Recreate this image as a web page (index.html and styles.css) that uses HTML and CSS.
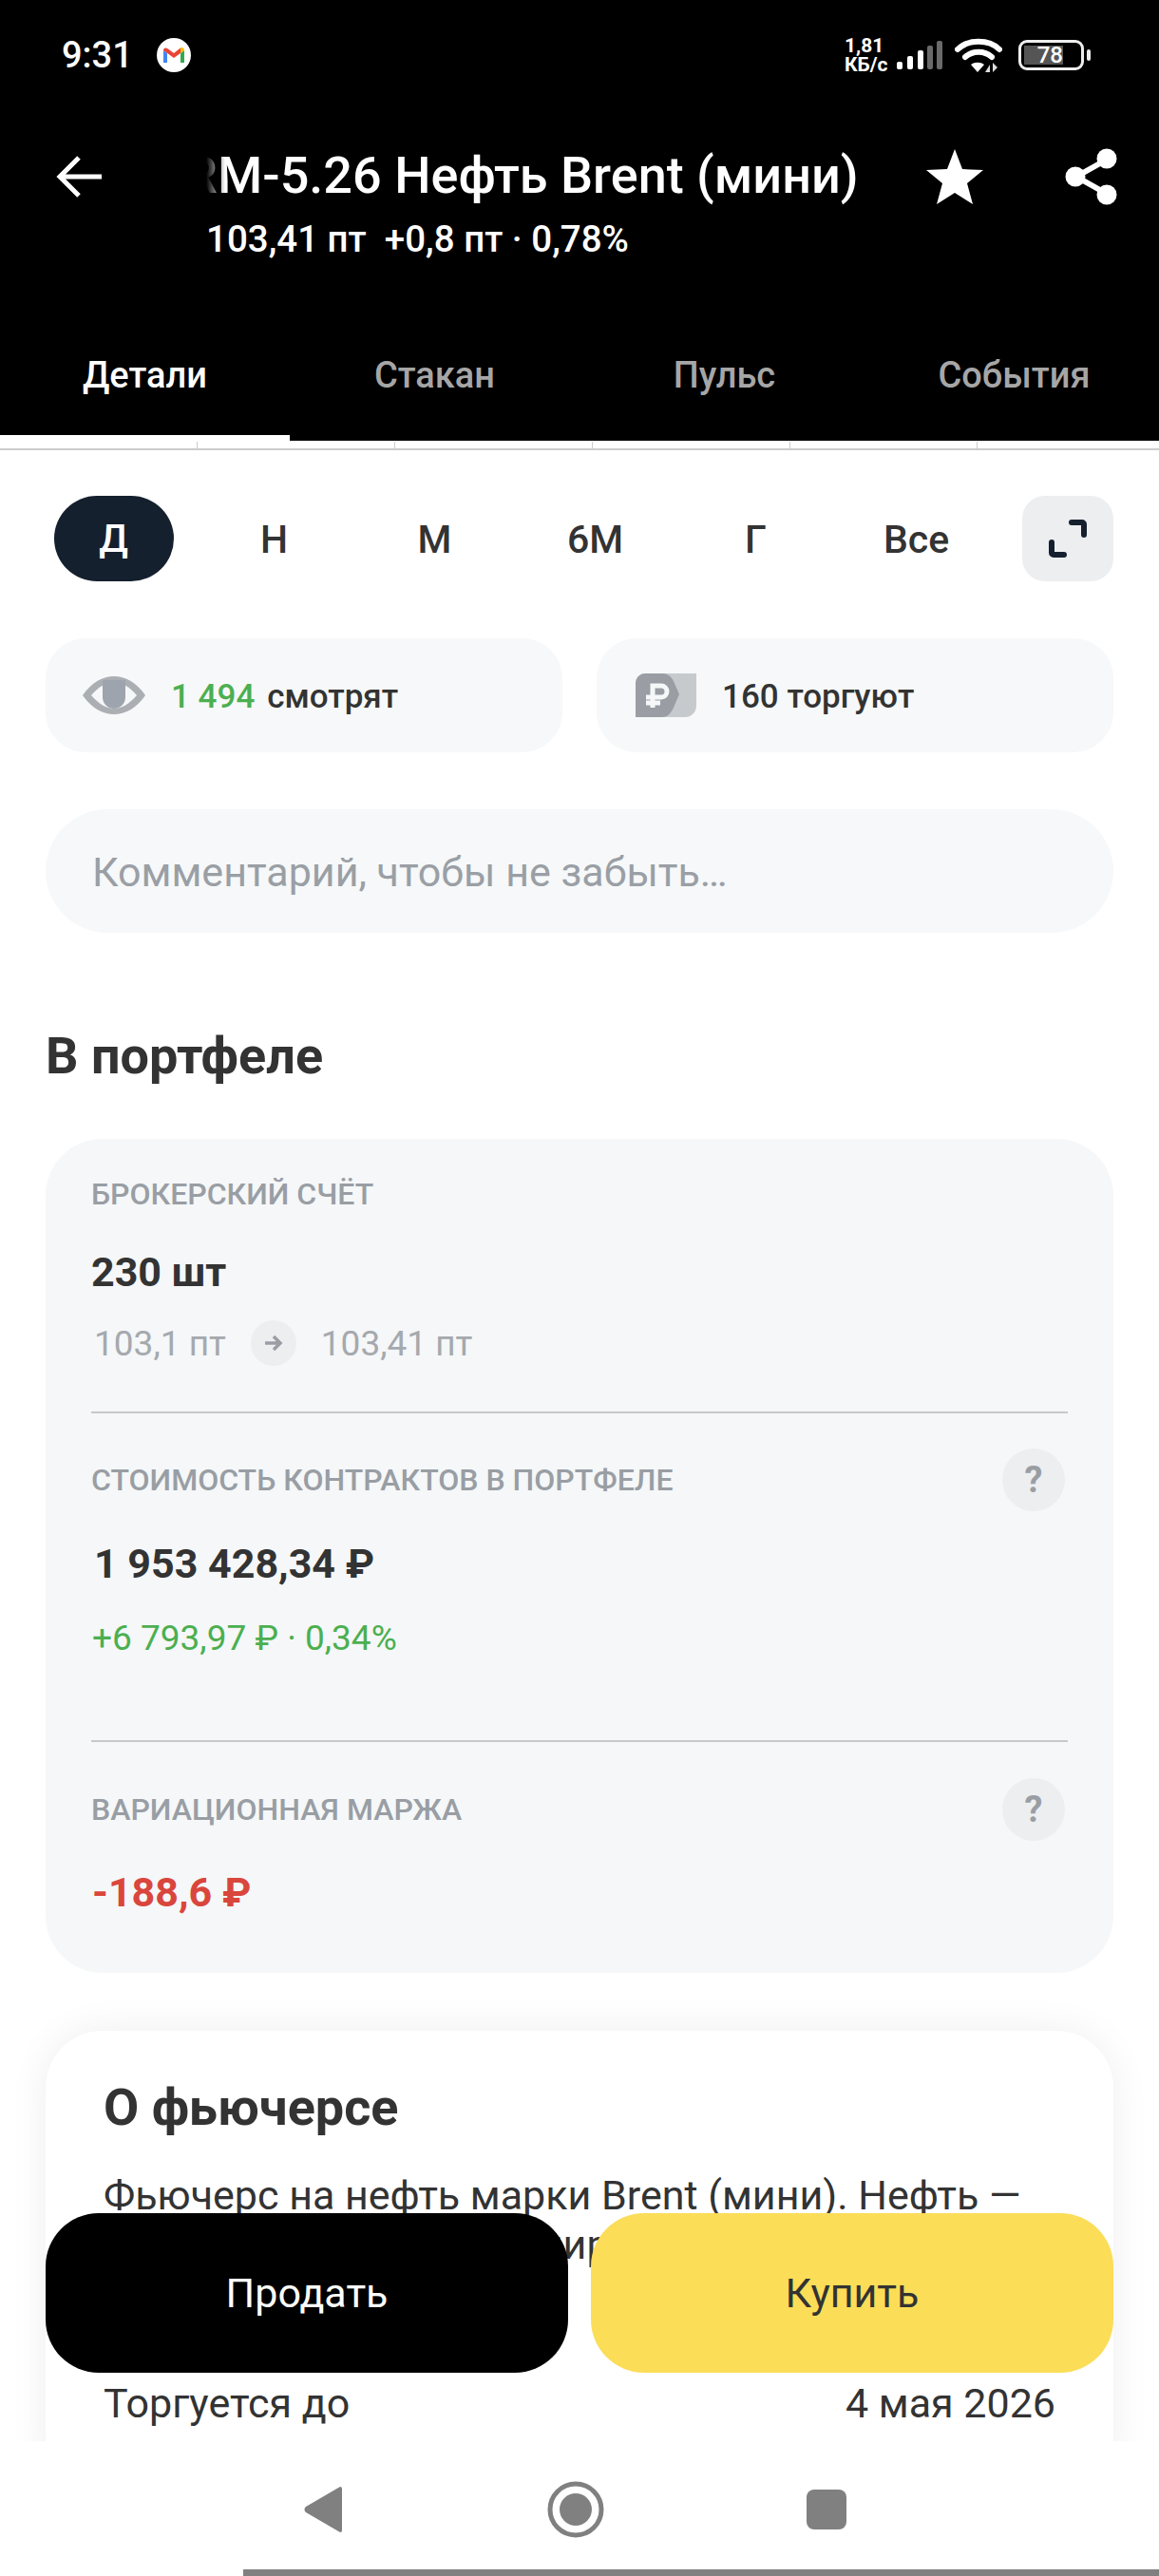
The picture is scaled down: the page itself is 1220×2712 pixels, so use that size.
FILE: index.html
```html
<!DOCTYPE html>
<html lang="ru">
    <head>
        <title>BRM-5.26 Нефть Brent (мини)</title>
        <meta charset="UTF-8">
        <link rel="stylesheet" href="styles.css">
    </head>

    <body>
        <div class="screen">
            <header class="top">
                <!-- android status bar -->
                <div class="status">
                    <span class="clock">9:31</span>
                    <svg class="gmail" viewBox="0 0 36 36" width="36" height="36">
                        <circle cx="18" cy="18" r="18" fill="#fff"/>
                        <path d="M7 13v13h4V16z" fill="#4285f4"/>
                        <path d="M25 16v10h4V13z" fill="#34a853"/>
                        <path d="M7 13l11 8 7-5 .6-6-7.600 6-6-4.600C9 9.500 7 10.500 7 13z" fill="#ea4335"/>
                        <path d="M25 16l4-3c0-2.500-2-3.500-3.400-3L25 10.500z" fill="#fbbc04"/>
                    </svg>
                    <span class="speed">1,81<br>КБ/с</span>
                    <svg class="signal" viewBox="0 0 48 30" width="48" height="30">
                        <rect x="0" y="22" width="6" height="8" rx="2" fill="#fff"/>
                        <rect x="11" y="16" width="6" height="14" rx="2" fill="#fff"/>
                        <rect x="22" y="10" width="6" height="20" rx="2" fill="#fff"/>
                        <rect x="32" y="5" width="6" height="25" rx="2" fill="#6a6a6a"/>
                        <rect x="42" y="0" width="6" height="30" rx="2" fill="#6a6a6a"/>
                    </svg>
                    <svg class="wifi" viewBox="0 0 50 36" width="50" height="36">
                        <path d="M3 12C14 1 36 1 47 12" fill="none" stroke="#fff" stroke-width="6" stroke-linecap="round"/>
                        <path d="M11 20c8-7 20-7 28 0" fill="none" stroke="#fff" stroke-width="6" stroke-linecap="round"/>
                        <path d="M17 28c4-3 10-3 14 0l-7 8z" fill="#fff"/>
                        <path d="M37 36v-8l-5 8zM40 26v10l5-5z" fill="#ddd"/>
                    </svg>
                    <div class="battery"><span class="battery-fill">78</span></div>
                    <div class="battery-nib"></div>
                </div>

                <!-- instrument title -->
                <div class="toolbar">
                    <svg class="back" viewBox="0 0 50 46" width="50" height="46">
                        <path d="M48 23H4M24 3L4 23l20 20" fill="none" stroke="#fff" stroke-width="5"/>
                    </svg>
                    <div class="title-block">
                        <div class="title-clip"><div class="title">BRM-5.26 Нефть Brent (мини)</div></div>
                        <div class="subtitle">103,41 пт&nbsp;&nbsp;+0,8 пт · 0,78%</div>
                    </div>
                    <svg class="star" viewBox="0 0 60 58" width="60" height="58">
                        <path d="M30 0l8 21 22 1-17 14 6 22-19-12-19 12 6-22L0 22l22-1z" fill="#fff"/>
                    </svg>
                    <svg class="share" viewBox="0 0 56 60" width="56" height="60">
                        <path d="M44 12L12 30l32 18" fill="none" stroke="#fff" stroke-width="6"/>
                        <circle cx="44" cy="11" r="10.500" fill="#fff"/>
                        <circle cx="11" cy="30" r="10.500" fill="#fff"/>
                        <circle cx="44" cy="49" r="10.500" fill="#fff"/>
                    </svg>
                </div>

                <nav class="tabs">
                    <div class="tab tab-active">Детали</div>
                    <div class="tab">Стакан</div>
                    <div class="tab">Пульс</div>
                    <div class="tab">События</div>
                </nav>
            </header>

            <main class="content">
                <div class="axis">
                    <span></span><span></span><span></span><span></span><span></span>
                </div>

                <div class="periods">
                    <div class="period"><span class="period-on">Д</span></div>
                    <div class="period">Н</div>
                    <div class="period">М</div>
                    <div class="period">6М</div>
                    <div class="period">Г</div>
                    <div class="period">Все</div>
                    <div class="expand">
                        <svg viewBox="0 0 42 42" width="42" height="42">
                            <path d="M25 4h11a2 2 0 0 1 2 2v11M4 25v11a2 2 0 0 0 2 2h11" fill="none" stroke="#15202e" stroke-width="6" stroke-linecap="round"/>
                        </svg>
                    </div>
                </div>

                <div class="chips">
                    <div class="chip">
                        <svg class="chip-eye" viewBox="0 0 66 40" width="66" height="40">
                            <path d="M0 20C10 6 21 0 33 0s23 6 33 20C56 34 45 40 33 40S10 34 0 20z" fill="#abafb3"/>
                            <path d="M9 20c8-9 16-14 24-14s16 5 24 14c-8 9-16 14-24 14S17 29 9 20z" fill="#f5f7f8"/>
                            <path d="M21 4h24v18a12 12 0 0 1-24 0z" fill="#9ea4ae"/>
                        </svg>
                        <span class="chip-text"><span class="green">1 494</span><span class="chip-word">смотрят</span></span>
                    </div>
                    <div class="chip">
                        <svg class="chip-rub" viewBox="0 0 64 46" width="64" height="46">
                            <path d="M10 0h54v34a12 12 0 0 1-12 12H0V10A10 10 0 0 1 10 0z" fill="#c7cacd"/>
                            <path d="M10 0h18c6 0 9 3 12 8l6 14-6 14c-3 6-6 10-12 10H0V10A10 10 0 0 1 10 0z" fill="#9a9ea4"/>
                            <path d="M18 36V13h9a6 6 0 0 1 0 12H11M11 31h15" fill="none" stroke="#f5f7f8" stroke-width="5"/>
                        </svg>
                        <span class="chip-text">160 торгуют</span>
                    </div>
                </div>

                <div class="comment">Комментарий, чтобы не забыть…</div>

                <h2 class="heading">В портфеле</h2>

                <section class="portfolio">
                    <div class="label label-first">БРОКЕРСКИЙ СЧЁТ</div>
                    <div class="value value-qty">230 шт</div>
                    <div class="prices">
                        <span>103,1 пт</span>
                        <span class="arrow">
                            <svg viewBox="0 0 20 18" width="20" height="18">
                                <path d="M1 9h16M10 2l7 7-7 7" fill="none" stroke="#9a9ea4" stroke-width="3.500"/>
                            </svg>
                        </span>
                        <span>103,41 пт</span>
                    </div>
                    <div class="rule rule-one"></div>

                    <div class="label-row">
                        <span class="label">СТОИМОСТЬ КОНТРАКТОВ В ПОРТФЕЛЕ</span>
                        <span class="help">?</span>
                    </div>
                    <div class="value value-cost">1 953 428,34 ₽</div>
                    <div class="profit green">+6 793,97 ₽ · 0,34%</div>
                    <div class="rule rule-two"></div>

                    <div class="label-row">
                        <span class="label">ВАРИАЦИОННАЯ МАРЖА</span>
                        <span class="help">?</span>
                    </div>
                    <div class="value value-margin">-188,6 ₽</div>
                </section>

                <section class="about">
                    <h2 class="about-title">О фьючерсе</h2>
                    <p class="about-text">Фьючерс на нефть марки Brent (мини). Нефть —<br>Популярный товар на мировом рынке<br>Торгуется на Мосбирже</p>
                    <div class="about-row"><span>Торгуется до</span><span>4 мая 2026</span></div>
                </section>

                <div class="actions">
                    <button class="btn btn-sell">Продать</button>
                    <button class="btn btn-buy">Купить</button>
                </div>
            </main>

            <footer class="navbar">
                <div class="nav-icons">
                    <svg viewBox="0 0 40 48" width="40" height="48"><path d="M38 0c1.500 0 2 1 2 2v44c0 1-.5 2-2 2L2 27c-2-1.500-2-4.500 0-6z" fill="#808080"/></svg>
                    <svg viewBox="0 0 60 60" width="60" height="60"><circle cx="30" cy="30" r="27" fill="none" stroke="#808080" stroke-width="5"/><circle cx="30" cy="30" r="17" fill="#808080"/></svg>
                    <svg viewBox="0 0 42 42" width="42" height="42"><rect width="42" height="42" rx="8" fill="#808080"/></svg>
                </div>
                <div class="nav-bar-line"></div>
            </footer>
        </div>
    </body>
</html>
```

FILE: styles.css
```css
body{
    margin: 0;
    background: #fff;
    color: #333;
    font-family: Roboto, "Noto Sans", sans-serif;
}
.screen{
    display: flex;
    flex-direction: column;
    height: 2712px;
    overflow: hidden;
}
.green{
    color: #4caf50;
}

/* black header */
.top{
    background: #000;
    color: #fff;
    height: 464px;
    flex: none;
}
.status{
    display: flex;
    align-items: center;
    height: 116px;
    padding: 0 72px 0 65px;
}
.clock{
    font-size: 38px;
    font-weight: 500;
    width: 100px;
}
.speed{
    margin-left: auto;
    font-size: 21px;
    font-weight: 700;
    line-height: 20px;
    width: 55px;
}
.signal{
    margin-right: 13px;
}
.wifi{
    margin-right: 17px;
}
.battery{
    box-sizing: border-box;
    width: 69px;
    height: 32px;
    border: 3px solid #eee;
    border-radius: 9px;
    padding: 3px;
}
.battery-fill{
    display: block;
    width: 41px;
    height: 20px;
    background: #555;
    color: #fff;
    font-size: 24px;
    font-weight: 500;
    line-height: 20px;
    text-align: right;
}
.battery-nib{
    width: 4px;
    height: 12px;
    margin-left: 3px;
    background: #eee;
    border-radius: 2px;
}
.toolbar{
    display: flex;
    align-items: flex-start;
    height: 210px;
    padding-left: 59px;
}
.back{
    margin-top: 47px;
    flex: none;
}
.title-block{
    width: 698px;
    margin-left: 108px;
    padding-top: 35px;
}
.title-clip{
    overflow: hidden;
    -webkit-mask-image: linear-gradient(to right, transparent 0, #000 20px);
    mask-image: linear-gradient(to right, transparent 0, #000 20px);
}
.title{
    font-size: 54px;
    font-weight: 500;
    line-height: 68px;
    white-space: nowrap;
    margin-left: -56px;
}
.subtitle{
    font-size: 38.500px;
    font-weight: 500;
    line-height: 48px;
    margin-top: 8px;
    padding-top: 1px;
}
.star{
    margin: 41px 0 0 60px;
    flex: none;
}
.share{
    margin: 40px 0 0 86px;
    flex: none;
}
.tabs{
    display: grid;
    grid-template-columns: repeat(4, 305px);
    height: 138px;
}
.tab{
    display: flex;
    align-items: center;
    justify-content: center;
    color: #a6a6a6;
    font-size: 38px;
    font-weight: 500;
}
.tab-active{
    color: #fff;
    box-shadow: inset 0 -6px #fff;
}

/* page under the header */
.content{
    position: relative;
    flex: 1;
    overflow: hidden;
}
.axis{
    display: grid;
    grid-template-columns: 208px 208px 208px 208px 197px;
    height: 7px;
    padding-top: 1px;
    border-bottom: 2px solid #ccc;
}
.axis span{
    border-right: 1px solid #ccc;
}
.periods{
    display: flex;
    align-items: center;
    height: 90px;
    margin-top: 48px;
    padding: 0 48px 0 35px;
}
.period{
    display: flex;
    align-items: center;
    justify-content: center;
    width: 169px;
    font-size: 41px;
    font-weight: 500;
    padding-top: 2px;
}
.period-on{
    display: flex;
    align-items: center;
    justify-content: center;
    width: 126px;
    height: 90px;
    margin-top: -2px;
    border-radius: 45px;
    background: #15202e;
    color: #fff;
}
.expand{
    display: flex;
    align-items: center;
    justify-content: center;
    width: 96px;
    height: 90px;
    margin-left: auto;
    border-radius: 24px;
    background: #eceef0;
}
.chips{
    display: flex;
    gap: 36px;
    margin-top: 60px;
    padding: 0 48px;
}
.chip{
    display: flex;
    align-items: center;
    flex: 1;
    height: 120px;
    border-radius: 42px;
    background: #f6f8f9;
    font-size: 35px;
    font-weight: 500;
}
.chip-text{
    padding-top: 2px;
}
.chip-word{
    margin-left: 13px;
}
.chip-eye{
    margin: 0 27px 0 39px;
}
.chip-rub{
    margin: 0 27px 0 41px;
}
.comment{
    box-sizing: border-box;
    display: flex;
    align-items: center;
    height: 130px;
    margin: 60px 48px 0;
    padding: 2px 0 0 49px;
    border-radius: 65px;
    background: #f6f8f9;
    color: #9a9fa5;
    font-size: 43px;
}
.heading{
    margin: 100px 48px 0;
    font-size: 54px;
    font-weight: 700;
    line-height: 60px;
}
.portfolio{
    margin: 57px 48px 0;
    padding: 38px 48px 60px;
    border-radius: 60px;
    background: #f5f7f8;
}
.label{
    color: #999ea4;
    font-size: 32px;
    font-weight: 500;
    line-height: 40px;
}
.label-first{
    margin-bottom: 37px;
}
.label-row{
    display: flex;
    align-items: center;
    justify-content: space-between;
    margin-right: 3px;
}
.help{
    display: flex;
    align-items: center;
    justify-content: center;
    width: 66px;
    height: 66px;
    border-radius: 50%;
    background: #eceef0;
    color: #9a9ea4;
    font-size: 38px;
    font-weight: 700;
}
.value{
    font-size: 43px;
    font-weight: 700;
    line-height: 50px;
}
.value-cost{
    margin: 30px 0 0 3px;
}
.value-margin{
    margin: 29px 0 0 1px;
    color: #d9463c;
}
.prices{
    display: flex;
    align-items: center;
    gap: 26px;
    height: 50px;
    margin: 25px 0 0 3px;
    color: #a5a9ae;
    font-size: 37px;
}
.arrow{
    display: flex;
    align-items: center;
    justify-content: center;
    width: 48px;
    height: 48px;
    border-radius: 50%;
    background: #eceef0;
}
.profit{
    margin: 29px 0 0 1px;
    font-size: 37px;
    line-height: 50px;
}
.rule{
    height: 2px;
    background: #c6c9cc;
}
.rule-one{
    margin: 47px 0 37px;
}
.rule-two{
    margin: 82px 0 38px;
}
.about{
    margin: 61px 48px 0;
    padding: 51px 61px 80px;
    border-radius: 60px;
    background: #fff;
    box-shadow: 0 0 40px rgba(0, 0, 0, .07);
}
.about-title{
    margin: 0;
    font-size: 54px;
    font-weight: 700;
    line-height: 60px;
}
.about-text{
    margin: 36px 0 0;
    font-size: 43px;
    line-height: 52px;
    white-space: nowrap;
}
.about-row{
    display: flex;
    justify-content: space-between;
    margin-top: 63px;
    font-size: 43px;
    line-height: 52px;
}
/* buy and sell float over the scrolling page */
.actions{
    position: absolute;
    left: 48px;
    right: 48px;
    bottom: 72px;
    display: flex;
    gap: 24px;
}
.btn{
    flex: 1;
    height: 168px;
    border: none;
    border-radius: 56px;
    font-family: inherit;
    font-size: 43px;
}
.btn-sell{
    background: #000;
    color: #fff;
}
.btn-buy{
    background: #fbdd58;
    color: #333;
}

/* android navigation */
.navbar{
    display: flex;
    flex-direction: column;
    flex: none;
    height: 142px;
    background: #fff;
}
.nav-icons{
    box-sizing: border-box;
    display: flex;
    flex: none;
    align-items: center;
    height: 135px;
    padding: 8px 0 0 320px;
}
.nav-icons svg:nth-child(2){
    margin-left: 216px;
}
.nav-icons svg:nth-child(3){
    margin-left: 213px;
}
.nav-bar-line{
    height: 7px;
    margin-left: 256px;
    background: #808080;
}
```
